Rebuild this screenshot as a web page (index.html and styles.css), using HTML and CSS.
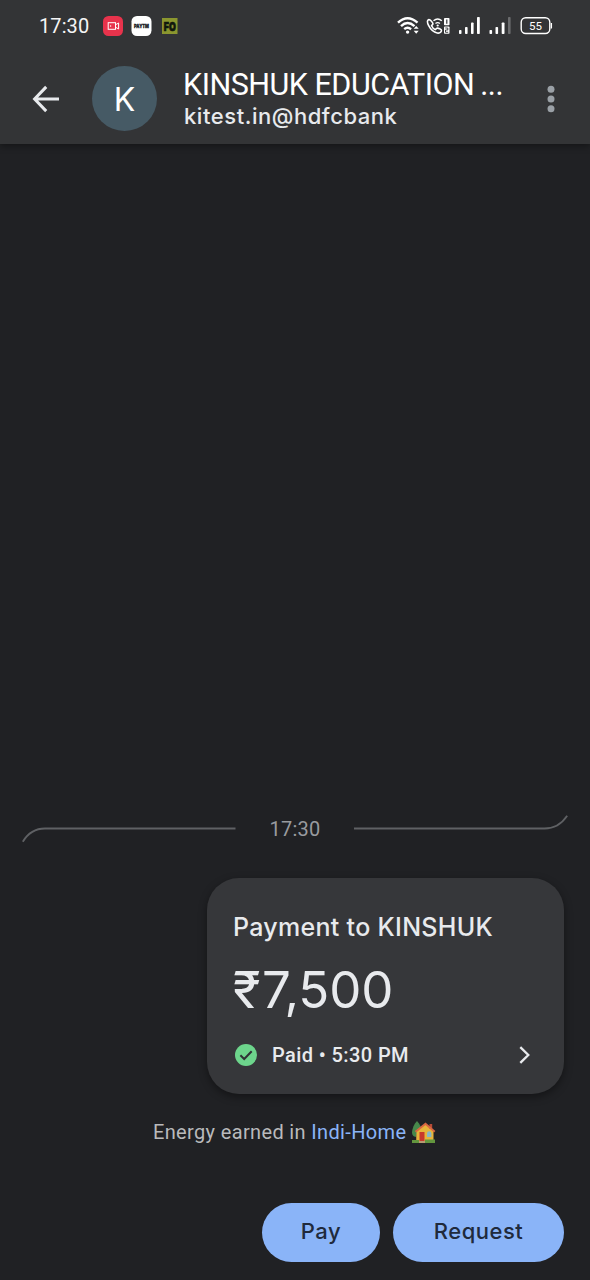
FILE: index.html
```html
<!DOCTYPE html>
<html lang="en">
<head>
<meta charset="utf-8">
<title>Payment</title>
<link rel="stylesheet" href="styles.css">
</head>
<body>
<div class="screen">
  <header class="top">
    <div class="status">
      <span class="clock">17:30</span>
      <svg class="apps" width="76" height="22" viewBox="0 0 76 22">
        <rect x="0" y="1" width="20" height="20" rx="5.5" fill="#e8334c"/>
        <g fill="none" stroke="#fff" stroke-width="1"><rect x="5.2" y="7.7" width="7.3" height="6.6"/><path d="M12.5 9.8 15.6 8v6l-3.1-1.8"/></g><circle cx="7.6" cy="11" r=".7" fill="#fff"/>
        <rect x="28.5" y="1" width="20" height="20" rx="5.5" fill="#fff"/>
        <text class="paytm" x="38.5" y="12.8" text-anchor="middle" textLength="15" lengthAdjust="spacingAndGlyphs">PAYTM</text>
        <rect x="59" y="3" width="15.5" height="16" fill="#8b962f"/>
        <text class="fo" x="66.8" y="15.7" text-anchor="middle" textLength="12" lengthAdjust="spacingAndGlyphs">FO</text>
      </svg>
      <svg class="radios" width="156" height="22" viewBox="0 0 156 22">
        <g fill="none" stroke="#fff" stroke-width="2.400">
          <path d="M1 7.700Q10.500-1.300 20.500 7.700M4 11.100Q10.500 4.900 17.500 11.100M7.200 14.200Q10.500 11.300 14.100 14.200"/>
        </g>
        <circle cx="10.600" cy="17.100" r="1.700" fill="#fff"/>
        <path d="M16.700 13.800 19.200 10.900 21.700 13.800ZM16.700 15.800 19.200 18.700 21.700 15.800Z" fill="#fff"/>
        <path d="M31.500 4.700c-1.300.7-1.400 2.800.2 6 1.800 3.500 4.600 6.500 8.500 7.300 2.100.4 4-.7 4.300-2.400.2-1.100-3.600-2.800-4.500-2.400l-1.700 1.400c-1.900-.8-3-2.200-3.700-3.900l1.300-1.700c.3-.9-2.700-5-4.400-4.300Z" fill="none" stroke="#fff" stroke-width="1.600"/>
        <path d="M36.500 5.800q4.200-3.600 8.300 0M38.500 8.500q2.200-1.700 4.400 0" fill="none" stroke="#fff" stroke-width="1.400"/><circle cx="40.700" cy="10.500" r="1.100" fill="#fff"/>
        <rect x="47" y="3" width="5.500" height="7.300" rx=".8" fill="#fff"/><path d="M49.800 4.500v4.300" stroke="#333537" stroke-width="1.200"/>
        <rect x="47" y="11.500" width="5.500" height="7.300" rx=".8" fill="#fff"/><path d="M48.300 13h2.500v2h-2.300v2.300h2.700" fill="none" stroke="#333537" stroke-width=".9"/>
        <g fill="#fff"><rect x="62" y="15" width="2.500" height="4" rx=".8"/><rect x="68" y="12" width="2.600" height="7" rx=".8"/><rect x="74" y="7.500" width="2.600" height="11.500" rx=".8"/><rect x="80" y="2" width="2.800" height="17" rx=".8"/><rect x="92.500" y="15" width="2.600" height="4" rx=".8"/><rect x="98.500" y="12" width="2.600" height="7" rx=".8"/><rect x="104.700" y="7.500" width="2.800" height="11.500" rx=".8"/><rect x="111" y="2" width="2.600" height="17" rx=".8" opacity=".28"/></g>
        <rect x="124.200" y="2.700" width="28.600" height="15.800" rx="4.500" fill="none" stroke="#fff" stroke-width="1.400"/><path d="M154.400 8v5.500" stroke="#fff" stroke-width="1.300"/>
        <text class="charge" x="138.500" y="14.800" text-anchor="middle">55</text>
      </svg>
    </div>
    <div class="bar">
      <svg class="back" width="28" height="28" viewBox="0 0 28 28"><path d="M27 14H3M14.200 1.900 2.600 14 14.200 26.100" fill="none" stroke="#e8eaed" stroke-width="3"/></svg>
      <div class="avatar">K</div>
      <div class="payee"><div class="name">KINSHUK EDUCATION <span class="dots">...</span></div><div class="vpa">kitest.in@hdfcbank</div></div>
      <svg class="more" width="8" height="28" viewBox="0 0 8 28" fill="#9aa0a6"><circle cx="4" cy="4.200" r="3.500"/><circle cx="4" cy="14" r="3.500"/><circle cx="4" cy="23.800" r="3.500"/></svg>
    </div>
  </header>
  <main class="feed">
    <div class="divider">
      <svg width="214" height="30" viewBox="0 0 214 30"><path d="M.8 28.700Q8.800 15.500 23 15.500H213.500" fill="none" stroke="#5f6164" stroke-width="1.800"/></svg>
      <span class="time">17:30</span>
      <svg width="214" height="30" viewBox="0 0 214 30"><path d="M0 15.500H190.500Q204.500 15.500 213.200 2.700" fill="none" stroke="#5f6164" stroke-width="1.800"/></svg>
    </div>
    <section class="card">
      <div class="title">Payment to KINSHUK</div>
      <div class="amount"><span class="rupee">₹</span><span class="value">7,500</span></div>
      <div class="paid">
        <svg width="24" height="22" viewBox="0 0 24 22"><circle cx="13" cy="11" r="11" fill="#6dd58c"/><path d="m7.400 11.300 3.800 3.700 7.500-7.700" fill="none" stroke="#303236" stroke-width="2"/></svg>
        <span class="paid-text">Paid • 5:30 PM</span>
        <svg class="chevron" width="12" height="18" viewBox="0 0 12 18"><path d="m1.300 1.100 8 7.900-8 7.900" fill="none" stroke="#e8eaed" stroke-width="2.300"/></svg>
      </div>
    </section>
    <div class="reward">
      <span class="reward-text">Energy earned in <span class="link">Indi-Home</span></span>
      <svg width="24" height="22" viewBox="0 0 24 22">
        <path d="M5 0C2 3 0 8 0 11.500c0 3 2 4.500 5 4.500s5-1.500 5-4.500C10 8 8 3 5 0Z" fill="#47884b"/><path d="M4 13h2v8H4Z" fill="#806242"/>
        <path d="M4.500 10.500 13.500 3 21.500 10v11h-17Z" fill="#e6b43a"/><path d="M17.500 3h2.700v5h-2.700Z" fill="#b74b37"/>
        <path d="m3.500 10.800 10-8 9.200 8" fill="none" stroke="#d96742" stroke-width="2"/>
        <rect x="7.500" y="11" width="5" height="9" fill="#c8382b"/><path d="M15 16v-3.500a2.200 2.200 0 0 1 4.400 0V16Z" fill="#86b6c4"/>
        <path d="M0 19h7v3H0ZM13 18.500h10V22H13Z" fill="#63963e"/><path d="M7 20h6v2H7Z" fill="#b89a72"/>
      </svg>
    </div>
    <div class="actions"><button class="btn pay"><span>Pay</span></button><button class="btn request"><span>Request</span></button></div>
  </main>
</div>
</body>
</html>
```

FILE: styles.css
```css
* { box-sizing: border-box; }
body { margin: 0; background: #202124; }
svg { display: block; flex: none; }
.screen { width: 590px; height: 1280px; display: flex; flex-direction: column; background: #202124; color: #e8eaed; overflow: hidden; font-family: Inter, "Open Sans", sans-serif; white-space: nowrap; }
.top { height: 144px; flex: none; background: #333436; box-shadow: 0 2px 7px rgba(0,0,0,.4); }
.status { height: 53px; display: flex; align-items: center; padding: 0 37px 1px 39px; }
.clock { width: 64px; font: 400 20px/24px Roboto, sans-serif; letter-spacing: .1px; color: #f5f5f5; }
.radios { margin-left: auto; }
.paytm { font: 900 5px Inter, sans-serif; fill: #15191d; stroke: #15191d; stroke-width: .3px; }
.fo { font: 900 12px Inter, sans-serif; fill: #11170d; stroke: #11170d; stroke-width: .7px; }
.charge { font: 400 11.500px Roboto, sans-serif; fill: #fff; }
.bar { height: 91px; display: flex; align-items: center; padding: 0 35.500px 0 32px; }
.avatar { width: 65px; height: 65px; margin-left: 32px; border-radius: 50%; background: #465a65; color: #fff; text-align: center; font-size: 32px; line-height: 67px; }
.payee { margin-left: 27px; padding-top: 2px; }
.name { font-family: Roboto, sans-serif; font-size: 30.500px; line-height: 32px; letter-spacing: -.500px; margin-left: -1px; color: #fff; }
.dots { margin-left: -1px; }
.vpa { font-size: 22px; line-height: 30px; font-weight: 500; letter-spacing: .550px; }
.more { margin-left: auto; }
.feed { flex: 1; display: flex; flex-direction: column; justify-content: flex-end; padding: 0 26px 18px; }
.divider { display: flex; align-items: center; justify-content: space-between; margin: 0 -4px 35px; height: 30px; }
.time { font: 400 20px/24px Roboto, sans-serif; letter-spacing: .2px; padding-top: 1px; color: #989b9f; }
.card { align-self: flex-end; width: 357px; height: 216px; margin-bottom: 1px; border-radius: 32px; background: #36373a; box-shadow: 0 3px 8px rgba(0,0,0,.4); padding: 33px 33px 0 26px; }
.title { font-size: 25px; line-height: 32px; font-weight: 500; letter-spacing: .3px; }
.amount { display: flex; height: 64px; margin-top: 15px; font-size: 51px; line-height: 64px; }
.rupee { width: 29px; }
.value { letter-spacing: -.1px; }
.paid { display: flex; align-items: center; height: 24px; margin-top: 21px; }
.paid-text { font: 500 20px/24px Roboto, sans-serif; margin-left: 15px; letter-spacing: .400px; }
.chevron { margin-left: auto; }
.reward { display: flex; align-items: center; margin: 24px 0 1px 127px; height: 26px; gap: 6px; }
.reward-text { font: 400 20px/24px Roboto, sans-serif; letter-spacing: .350px; color: #b9babc; }
.link { color: #8ab4f8; }
.actions { display: flex; justify-content: flex-end; gap: 13px; margin-top: 57px; }
.btn { height: 59px; border: 0; border-radius: 30px; padding: 0 0 2px; background: #8ab4f8; color: #202a3c; font: 500 22px/57px Inter, sans-serif; letter-spacing: .5px; }
.pay { width: 118px; }
.request { width: 171px; }
```
